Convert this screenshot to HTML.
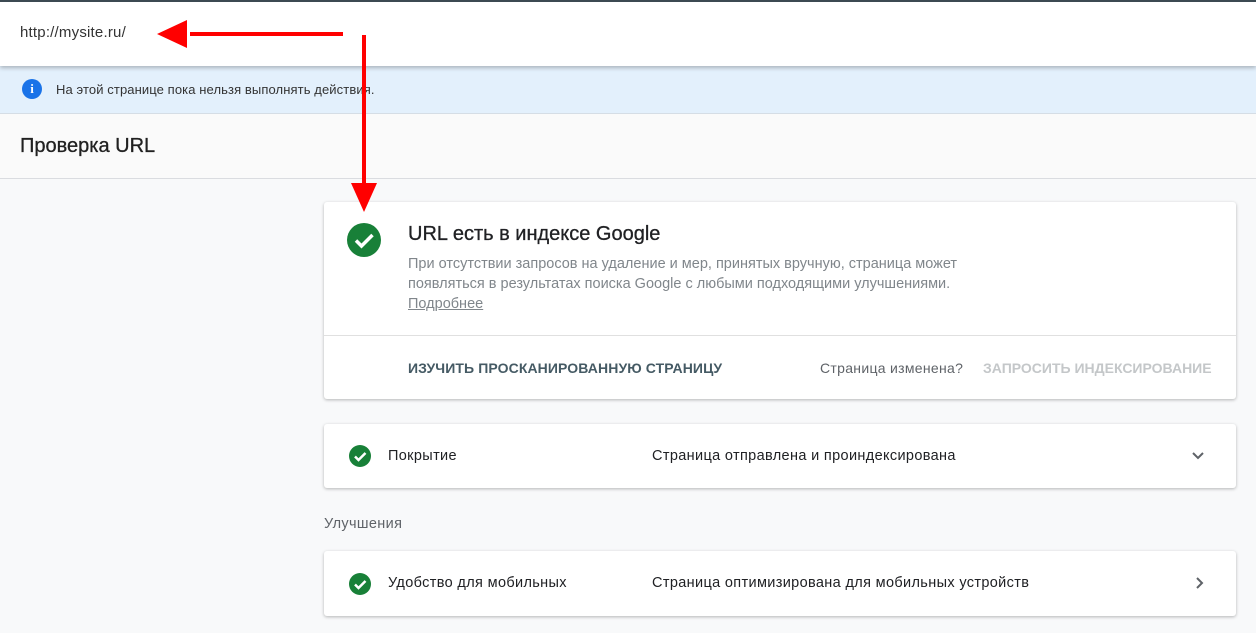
<!DOCTYPE html>
<html><head><meta charset="utf-8"><style>
*{margin:0;padding:0;box-sizing:border-box}
body{width:1256px;height:633px;overflow:hidden;background:#f8f9fa;font-family:"Liberation Sans",Roboto,sans-serif;position:relative;color:#202124}
.top{position:absolute;left:0;top:0;width:1256px;height:66px;background:#fff;border-top:2px solid #3c4a52;box-shadow:0 2px 4px rgba(0,0,0,.25);z-index:3}
.top span{position:absolute;left:20px;top:22px;font-size:15px;color:#333;letter-spacing:.2px}
.info{position:absolute;left:0;top:66px;width:1256px;height:48px;background:#e3f0fc;border-bottom:1px solid #d5dde5}
.info .i{position:absolute;left:22px;top:13px;width:20px;height:20px;border-radius:50%;background:#1a73e8;color:#fff;font:bold 13px "Liberation Serif",serif;text-align:center;line-height:20px}
.info span{position:absolute;left:56px;top:16px;font-size:13px;color:#333;letter-spacing:.1px}
.title{position:absolute;left:0;top:114px;width:1256px;height:65px;background:#fafafa;border-bottom:1px solid #dadce0}
.title span{position:absolute;left:20px;top:21px;font-size:20px;color:#212121;-webkit-text-stroke:.3px #212121}
.card{position:absolute;left:324px;width:912px;background:#fff;border-radius:3px;box-shadow:0 1px 3px rgba(0,0,0,.28)}
.chk{position:absolute;border-radius:50%;background:#188038}
.t{position:absolute;white-space:nowrap}
.r{font-size:14.5px;letter-spacing:.35px}
</style></head><body>
<div class="top"><span>http://mysite.ru/</span></div>
<div class="info"><div class="i">i</div><span>На этой странице пока нельзя выполнять действия.</span></div>
<div class="title"><span>Проверка URL</span></div>

<div class="card" style="top:202px;height:197px">
 <div class="chk" style="left:23px;top:21px;width:34px;height:34px"><svg width="34" height="34" viewBox="0 0 34 34"><path d="M9 17.5l5.5 5.5L25.5 12" stroke="#fff" stroke-width="3.5" fill="none"/></svg></div>
 <div class="t" style="left:84px;top:21px;font-size:20px;color:#202124;-webkit-text-stroke:.3px #202124">URL есть в индексе Google</div>
 <div class="t" style="left:84px;top:52px;font-size:14.5px;color:#80868b;line-height:20px">При отсутствии запросов на удаление и мер, принятых вручную, страница может<br>появляться в результатах поиска Google с любыми подходящими улучшениями.<br><u>Подробнее</u></div>
 <div style="position:absolute;left:0;top:133px;width:912px;height:1px;background:#e0e0e0"></div>
 <div class="t" style="left:84px;top:158px;font-size:14px;font-weight:bold;color:#455a64;letter-spacing:.1px">ИЗУЧИТЬ ПРОСКАНИРОВАННУЮ СТРАНИЦУ</div>
 <div class="t" style="left:496px;top:158px;font-size:14px;color:#5f6368;letter-spacing:.3px">Страница изменена?</div>
 <div class="t" style="left:659px;top:158px;font-size:14px;font-weight:bold;color:#c4c7c9">ЗАПРОСИТЬ ИНДЕКСИРОВАНИЕ</div>
</div>

<div class="card" style="top:424px;height:64px">
 <div class="chk" style="left:25px;top:21px;width:22px;height:22px"><svg width="22" height="22" viewBox="0 0 22 22"><path d="M6 11.5l3.5 3.5L16.5 8" stroke="#fff" stroke-width="2.5" fill="none"/></svg></div>
 <div class="t r" style="left:64px;top:24px">Покрытие</div>
 <div class="t r" style="left:328px;top:24px">Страница отправлена и проиндексирована</div>
 <svg style="position:absolute;left:866px;top:26px" width="16" height="12"><path d="M3 3l5 5 5-5" stroke="#5f6368" stroke-width="2" fill="none"/></svg>
</div>

<div class="t r" style="left:324px;top:516px;color:#5f6368">Улучшения</div>

<div class="card" style="top:551px;height:65px">
 <div class="chk" style="left:25px;top:22px;width:22px;height:22px"><svg width="22" height="22" viewBox="0 0 22 22"><path d="M6 11.5l3.5 3.5L16.5 8" stroke="#fff" stroke-width="2.5" fill="none"/></svg></div>
 <div class="t r" style="left:64px;top:24px">Удобство для мобильных</div>
 <div class="t r" style="left:328px;top:24px">Страница оптимизирована для мобильных устройств</div>
 <svg style="position:absolute;left:870px;top:24px" width="12" height="16"><path d="M3 3l5 5-5 5" stroke="#5f6368" stroke-width="2" fill="none"/></svg>
</div>

<svg style="position:absolute;left:0;top:0;z-index:5" width="1256" height="633">
 <line x1="343" y1="34" x2="190" y2="34" stroke="#f00" stroke-width="4"/>
 <polygon points="157,34 187,20 187,48" fill="#f00"/>
 <line x1="364" y1="35" x2="364" y2="185" stroke="#f00" stroke-width="4"/>
 <polygon points="364,212 351,183 377,183" fill="#f00"/>
</svg>
</body></html>
